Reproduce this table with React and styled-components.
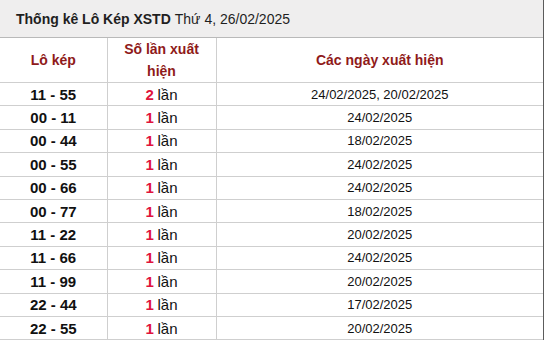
import React from "react";
import styled, { createGlobalStyle } from "styled-components";

const GlobalStyle = createGlobalStyle`
  body {
    margin: 0;
    background: #ffffff;
    font-family: "Liberation Sans", Arial, sans-serif;
  }
`;

const Wrapper = styled.div`
  width: 543px;
  border-right: 1px solid #5c5c5c;
`;

const TitleBar = styled.div`
  height: 37px;
  display: flex;
  align-items: center;
  padding-left: 16px;
  background: #efeeee;
  border-bottom: 1px solid #b9b9b9;
  font-size: 14px;
  color: #1f1f1f;

  b {
    font-weight: bold;
    margin-right: 4px;
  }
`;

const Table = styled.table`
  width: 543px;
  border-collapse: collapse;
  table-layout: fixed;
`;

const Col = styled.col`
  width: ${(p) => p.w}px;
`;

const HeadCell = styled.th`
  height: 44px;
  padding: 0 12px;
  font-size: 14px;
  font-weight: bold;
  line-height: 22px;
  color: #8f1a1a;
  text-align: center;
  border-bottom: 1px solid #cfcfcf;
  border-left: ${(p) => (p.first ? "none" : "1px solid #cfcfcf")};
`;

const Row = styled.tr`
  height: 23.4px;
`;

const Cell = styled.td`
  padding: 0;
  text-align: center;
  color: #111;
  font-size: ${(p) => (p.bold ? "15px" : "13px")};
  font-weight: ${(p) => (p.bold ? "bold" : "normal")};
  border-bottom: 1px solid #cfcfcf;
  border-left: ${(p) => (p.first ? "none" : "1px solid #cfcfcf")};
  white-space: nowrap;
`;

const Count = styled.span`
  color: #e0143c;
  font-weight: bold;
  font-size: 15px;
`;

const Times = styled.span`
  font-size: 15px;
  color: #111;
`;

const rows = [
  ["11 - 55", 2, "24/02/2025, 20/02/2025"],
  ["00 - 11", 1, "24/02/2025"],
  ["00 - 44", 1, "18/02/2025"],
  ["00 - 55", 1, "24/02/2025"],
  ["00 - 66", 1, "24/02/2025"],
  ["00 - 77", 1, "18/02/2025"],
  ["11 - 22", 1, "20/02/2025"],
  ["11 - 66", 1, "24/02/2025"],
  ["11 - 99", 1, "20/02/2025"],
  ["22 - 44", 1, "17/02/2025"],
  ["22 - 55", 1, "20/02/2025"],
];

export default function App() {
  return (
    <>
      <GlobalStyle />
      <Wrapper>
        <TitleBar>
          <b>Thống kê Lô Kép XSTD</b> Thứ 4, 26/02/2025
        </TitleBar>
        <Table>
          <colgroup>
            <Col w={107} />
            <Col w={109} />
            <Col w={327} />
          </colgroup>
          <thead>
            <tr>
              <HeadCell first>Lô kép</HeadCell>
              <HeadCell>Số lần xuất hiện</HeadCell>
              <HeadCell>Các ngày xuất hiện</HeadCell>
            </tr>
          </thead>
          <tbody>
            {rows.map(([pair, n, dates]) => (
              <Row key={pair}>
                <Cell first bold>
                  {pair}
                </Cell>
                <Cell>
                  <Count>{n}</Count> <Times>lần</Times>
                </Cell>
                <Cell>{dates}</Cell>
              </Row>
            ))}
          </tbody>
        </Table>
      </Wrapper>
    </>
  );
}
